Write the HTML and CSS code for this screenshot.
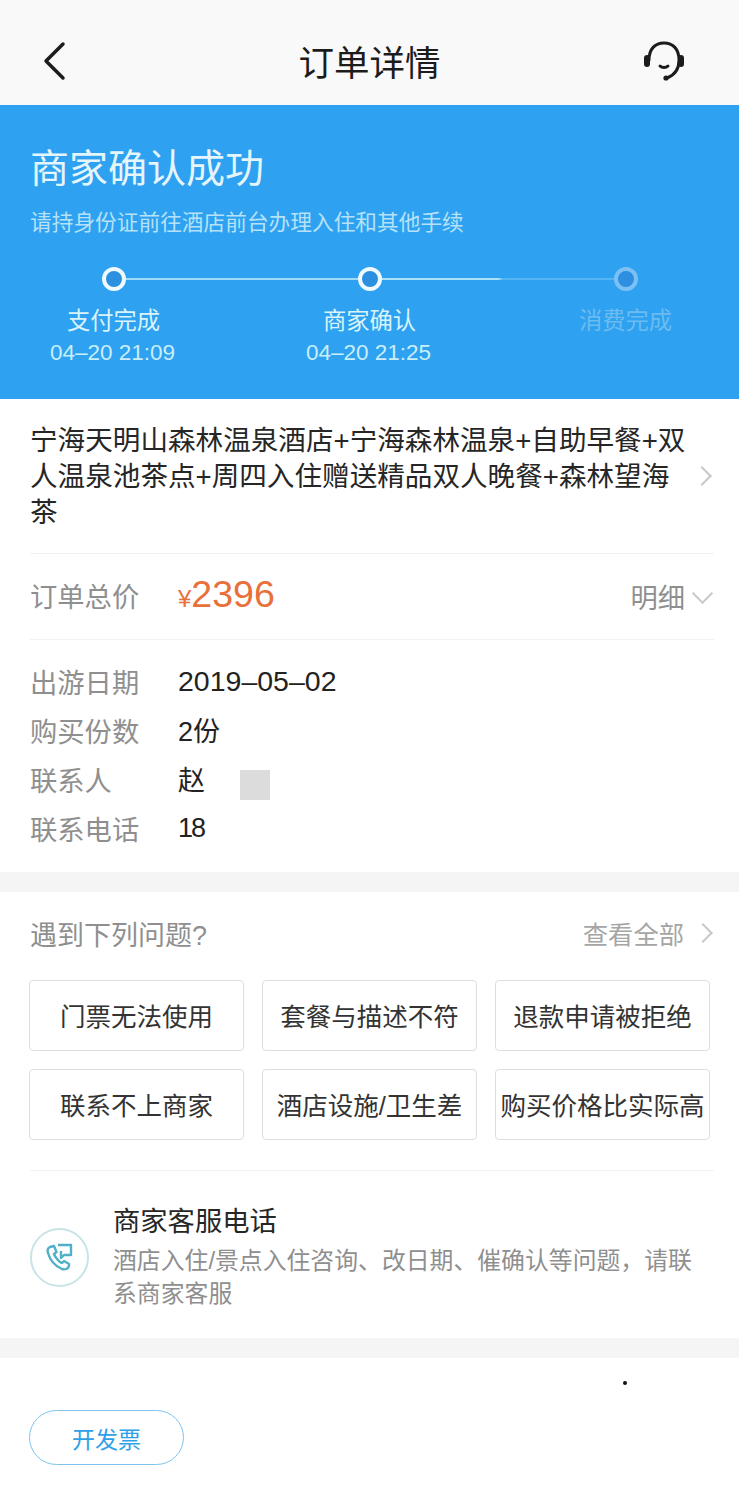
FILE: index.html
```html
<!DOCTYPE html>
<html lang="zh-CN">
  <head>
    <meta charset="UTF-8" />
    <meta name="viewport" content="width=device-width, initial-scale=1.0" />
    <title>订单详情</title>
    <link rel="stylesheet" href="styles.css">
  </head>
  <body>
    <header class="topbar">
      <svg class="back-icon" width="24" height="40" viewBox="0 0 24 40"><path d="M21 3 L4 20 L21 37" /></svg>
      <h1>订单详情</h1>
      <svg class="service-icon" width="44" height="44" viewBox="0 0 44 44">
        <path class="thin" d="M7 21 C7 10 13 4 22 4 C31 4 37 10 37 21 C37 30 33 36 25 39" />
        <path class="thin" d="M18 27 C20 29 24 29 26 27" />
        <rect x="2" y="16" width="6" height="12" rx="3" />
        <rect x="36" y="16" width="6" height="12" rx="3" />
        <circle cx="24" cy="39" r="2.600" />
      </svg>
    </header>

    <section class="status">
      <h2>商家确认成功</h2>
      <p class="status-tip">请持身份证前往酒店前台办理入住和其他手续</p>
      <ol class="steps">
        <li class="step step-first">
          <span class="dot"></span>
          <b>支付完成</b>
          <time>04–20 21:09</time>
        </li>
        <li class="step step-current">
          <span class="dot"></span>
          <b>商家确认</b>
          <time>04–20 21:25</time>
        </li>
        <li class="step step-todo">
          <span class="dot"></span>
          <b>消费完成</b>
        </li>
      </ol>
    </section>

    <section class="order">
      <div class="product">
        <p>宁海天明山森林温泉酒店+宁海森林温泉+自助早餐+双人温泉池茶点+周四入住赠送精品双人晚餐+森林望海茶</p>
        <i class="chev chev-right"></i>
      </div>
      <div class="price-row">
        <span class="label">订单总价</span>
        <span class="price"><small>¥</small>2396</span>
        <span class="more">明细<i class="chev chev-down"></i></span>
      </div>
      <dl class="info">
        <div class="info-row"><dt>出游日期</dt><dd class="date">2019–05–02</dd></div>
        <div class="info-row"><dt>购买份数</dt><dd>2份</dd></div>
        <div class="info-row"><dt>联系人</dt><dd>赵<span class="mask"></span></dd></div>
        <div class="info-row"><dt>联系电话</dt><dd class="tel">18</dd></div>
      </dl>
    </section>

    <section class="help">
      <div class="help-head">
        <span>遇到下列问题?</span>
        <span class="all">查看全部<i class="chev chev-right"></i></span>
      </div>
      <div class="issues">
        <a class="issue">门票无法使用</a>
        <a class="issue">套餐与描述不符</a>
        <a class="issue">退款申请被拒绝</a>
        <a class="issue">联系不上商家</a>
        <a class="issue">酒店设施/卫生差</a>
        <a class="issue">购买价格比实际高</a>
      </div>
      <div class="contact">
        <span class="contact-icon">
          <svg width="30" height="30" viewBox="0 0 30 30">
            <path d="M5 5 C3 6 2 8 3 11 C5 18 10 24 17 27 C20 28 23 27 24 24 L24 22 L19 19 L17 21 C14 20 10 15 9 12 L11.500 10 L9 4 Z" />
            <path d="M13 3 L26 3 L26 13 L19 13 L16 16 L16 9" />
          </svg>
        </span>
        <div>
          <h3>商家客服电话</h3>
          <p>酒店入住/景点入住咨询、改日期、催确认等问题，请联系商家客服</p>
        </div>
      </div>
    </section>

    <section class="actions">
      <a class="invoice">开发票</a>
      <span class="speck"></span>
    </section>
  </body>
</html>
```

FILE: styles.css
```css
* {
  box-sizing: border-box;
}

body {
  margin: 0;
  background: #fff;
  color: #222;
  font-family: "Liberation Sans", "Noto Sans CJK SC", sans-serif;
  overflow-x: hidden;
}

h1,
h2,
h3,
p,
ol,
dl,
dd {
  margin: 0;
  padding: 0;
  font-weight: 400;
}

/* top bar */
.topbar {
  height: 105px;
  padding: 16px 42px 0;
  background: #f9f9f9;
  display: grid;
  grid-template-columns: 1fr auto 1fr;
  align-items: center;
}

.topbar h1 {
  font-size: 35.500px;
  color: #1c1c1c;
}

.back-icon path {
  fill: none;
  stroke: #1c1c1c;
  stroke-width: 3.500;
  stroke-linecap: round;
  stroke-linejoin: round;
}

.service-icon {
  justify-self: end;
  margin-right: 11px;
  fill: #1c1c1c;
}

.service-icon .thin {
  fill: none;
  stroke: #1c1c1c;
  stroke-width: 3;
  stroke-linecap: round;
}

/* blue status block */
.status {
  height: 294px;
  padding: 37px 30px 0;
  background: #2ea1f0;
  color: #fff;
}

.status h2 {
  font-size: 39px;
  line-height: 54px;
  color: #e4f5fb;
}

.status-tip {
  margin-top: 13px;
  font-size: 21.700px;
  line-height: 28px;
  color: #b5e2f8;
}

.steps {
  list-style: none;
  margin-top: 30px;
  display: grid;
  grid-template-columns: repeat(3, 256px);
  justify-content: center;
}

.step {
  position: relative;
  display: flex;
  flex-direction: column;
  align-items: center;
  color: #d9f3fb;
}

.step b {
  margin-top: 14px;
  font-weight: 400;
  font-size: 23.300px;
  line-height: 32px;
}

.step time {
  margin: 1px 2px 0 0;
  font-size: 22.500px;
  line-height: 30px;
  color: #c8eef9;
}

.dot {
  width: 24px;
  height: 24px;
  border: 4px solid #eefaff;
  border-radius: 50%;
  background: #2c8fdf;
}

.step-first::after,
.step-current::after {
  content: "";
  position: absolute;
  top: 11px;
  left: calc(50% + 12px);
  width: 232px;
  height: 2px;
  background: #9fdcf8;
}

.step-current::after {
  background: linear-gradient(90deg, #a9e2f9 0, #a9e2f9 50%, #55b4f2 52%, #55b4f2 100%);
}

.step-todo .dot {
  border-color: #7cc0f5;
}

.step-todo b {
  color: #6cbcf1;
}

/* order */
.order {
  padding: 0 25px 0 30px;
  height: 473px;
}

.product {
  height: 155px;
  padding-top: 2px;
  border-bottom: 1px solid #f2f2f2;
  display: flex;
  align-items: center;
  justify-content: space-between;
}

.product p {
  width: 660px;
  font-size: 27.600px;
  line-height: 36px;
  color: #262626;
}

.chev {
  display: inline-block;
  width: 14px;
  height: 14px;
  border-top: 2px solid #c8c8c8;
  border-right: 2px solid #c8c8c8;
}

.chev-right {
  transform: rotate(45deg);
  flex: none;
}

.product .chev {
  margin: -2px 5px 0 0;
}

.chev-down {
  width: 15px;
  height: 15px;
  margin: 0 4px 5px 10px;
  transform: rotate(135deg);
}

.price-row {
  height: 86px;
  border-bottom: 1px solid #f2f2f2;
  display: flex;
  align-items: center;
}

.label,
.info dt {
  width: 148px;
  font-size: 27.300px;
  color: #8f8f8f;
  margin-top: -2px;
}

.label {
  margin-top: -4px;
}

.price {
  font-size: 37.500px;
  color: #e8703a;
  margin-top: -4px;
}

.price small {
  font-size: 24px;
}

.more {
  margin: -2px 0 0 auto;
  font-size: 27.300px;
  color: #8f8f8f;
  display: flex;
  align-items: center;
}

.info {
  padding-top: 17px;
}

.info-row {
  display: flex;
  align-items: center;
  height: 49px;
}

.info dd {
  margin-top: -2px;
  font-size: 27px;
  color: #222;
  display: flex;
  align-items: center;
}

.info .date {
  margin-top: 0;
  font-size: 28.500px;
}

.info .tel {
  margin-top: 0;
  letter-spacing: -2px;
}

.mask {
  width: 30px;
  height: 30px;
  margin: 12px 0 0 35px;
  background: #dcdcdc;
}

/* help */
.help {
  height: 486px;
  padding: 0 29px;
  border-top: 20px solid #f5f5f5;
  border-bottom: 20px solid #f5f5f5;
}

.help-head {
  height: 88px;
  padding: 0 0 6px 1px;
  display: flex;
  align-items: center;
  justify-content: space-between;
  font-size: 27px;
  color: #8f8f8f;
}

.all {
  font-size: 25.300px;
  color: #a5a5a5;
  display: flex;
  align-items: center;
  gap: 12px;
}

.issues {
  display: grid;
  grid-template-columns: repeat(3, 215px);
  grid-auto-rows: 71px;
  gap: 18px;
}

.issue {
  padding-bottom: 2px;
  border: 1px solid #dedede;
  border-radius: 4px;
  display: flex;
  align-items: center;
  justify-content: center;
  font-size: 25.500px;
  color: #333;
  white-space: nowrap;
}

.contact {
  margin: 30px -4px 0 1px;
  padding: 33px 4px 0 0;
  border-top: 1px solid #f2f2f2;
  display: flex;
  align-items: center;
  gap: 24px;
}

.contact-icon {
  flex: none;
  width: 59px;
  height: 59px;
  border: 2px solid #c8e4e6;
  border-radius: 50%;
  display: flex;
  align-items: center;
  justify-content: center;
}

.contact-icon path {
  fill: none;
  stroke: #4fb0c8;
  stroke-width: 2.400;
  stroke-linejoin: round;
}

.contact h3 {
  margin-bottom: 4px;
  font-size: 27.300px;
  line-height: 36px;
  color: #262626;
}

.contact p {
  font-size: 23.850px;
  line-height: 33px;
  color: #8f8f8f;
}

/* bottom */
.actions {
  position: relative;
  padding: 52px 29px 0;
}

.invoice {
  width: 155px;
  height: 55px;
  border: 1px solid #7cc4ee;
  border-radius: 28px;
  display: flex;
  align-items: center;
  justify-content: center;
  font-size: 23px;
  color: #2f9fe8;
}

.speck {
  position: absolute;
  left: 623px;
  top: 23px;
  width: 4px;
  height: 4px;
  border-radius: 50%;
  background: #111;
}
```
